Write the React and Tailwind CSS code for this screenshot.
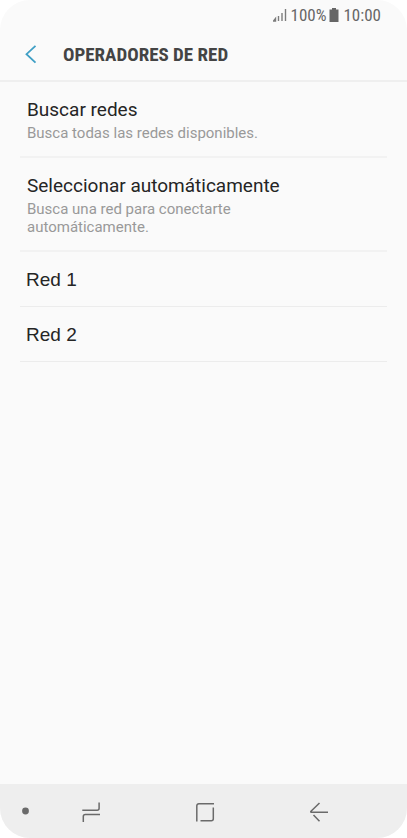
const options = [
  { title: "Buscar redes", detail: "Busca todas las redes disponibles." },
  {
    title: "Seleccionar automáticamente",
    detail: "Busca una red para conectarte automáticamente.",
  },
];

const networks = ["Red 1", "Red 2"];

function StatusBar() {
  return (
    <div className="flex h-[30px] items-center justify-end pr-[26px] font-['Roboto_Condensed',Roboto,sans-serif] text-[17px] leading-5 text-[#666666]">
      <svg width="14" height="14" viewBox="0 0 14 14" className="mr-1" aria-hidden="true">
        <path
          d="M.5 13l2-2.5V13zM5.5 8v5M9 5v8M12.5 1v12"
          fill="none"
          stroke="#7c7c7c"
          strokeWidth="1.4"
        />
      </svg>
      <span>100%</span>
      <svg width="10" height="14" viewBox="0 0 10 14" className="mr-1 ml-[3px]" aria-hidden="true">
        <path d="M3 0h4v1.5h2.5V14h-9V1.5H3z" fill="#666666" />
      </svg>
      <span>10:00</span>
    </div>
  );
}

function Header() {
  return (
    <header className="flex h-[52px] items-center border-b-2 border-[#efefef] pl-6">
      <button type="button" aria-label="Atrás" className="mr-6 shrink-0">
        <svg width="15" height="20" viewBox="0 0 15 20" className="block">
          <path
            d="M11.5 .8L2.5 9.2l9 8.5"
            fill="none"
            stroke="#3f9fc5"
            strokeWidth="1.8"
          />
        </svg>
      </button>
      <h1 className="font-['Roboto_Condensed',Roboto,sans-serif] text-[19px] leading-6 font-bold text-[#444444]">
        OPERADORES DE RED
      </h1>
    </header>
  );
}

function NavBar() {
  return (
    <nav className="flex h-[54px] items-center bg-[#eeeeee] pt-0.5 pl-[22px]">
      <button type="button" aria-label="Fijar barra" className="mr-[51px]">
        <svg width="8" height="20" viewBox="0 0 8 20" className="block">
          <circle cx="3.5" cy="9" r="3.4" fill="#6a6a6a" />
        </svg>
      </button>
      <div className="flex gap-[94px]">
        <button type="button" aria-label="Recientes">
          <svg width="20" height="22" viewBox="0 0 20 22" className="block">
            <path
              d="M1.3 9.2h14.8a2 2 0 0 0 2-2V1.5M19 13.5H4.3a2 2 0 0 0-2 2V21"
              fill="none"
              stroke="#6a6a6a"
              strokeWidth="1.5"
            />
          </svg>
        </button>
        <button type="button" aria-label="Inicio">
          <svg width="20" height="22" viewBox="0 0 20 22" className="block">
            <path
              d="M1.8 20.5V4.8a2 2 0 0 1 2-2H19M18.3 6.5v11.3a2 2 0 0 1-2 2H5.5"
              fill="none"
              stroke="#6a6a6a"
              strokeWidth="1.5"
            />
          </svg>
        </button>
        <button type="button" aria-label="Volver">
          <svg width="20" height="22" viewBox="0 0 20 22" className="block">
            <path
              d="M10.5 2L2 10.3q-.8 1 .4 1H19M4.5 14l6 6.3"
              fill="none"
              stroke="#6a6a6a"
              strokeWidth="1.5"
            />
          </svg>
        </button>
      </div>
    </nav>
  );
}

export default function App() {
  return (
    <div className="min-h-screen bg-white">
      <div className="flex min-h-screen flex-col overflow-hidden rounded-[30px] bg-[#fafafa] font-['Roboto',sans-serif]">
        <StatusBar />
        <Header />
        <main className="grow px-5">
          <ul>
            {options.map((option) => (
              <li key={option.title} className="border-b-2 border-[#f2f2f2]">
                <button type="button" className="block w-full px-[7px] pt-4 pb-[14px] text-left">
                  <span className="block text-[19px] leading-6 text-[#252525]">
                    {option.title}
                  </span>
                  <span className="mt-0.5 block max-w-60 text-[15px] leading-[18px] text-[#999999]">
                    {option.detail}
                  </span>
                </button>
              </li>
            ))}
            {networks.map((name) => (
              <li key={name} className="border-b border-[#ececec]">
                <button
                  type="button"
                  className="block w-full px-[6px] pt-4 pb-[14px] text-left font-['Liberation_Sans',Arial,sans-serif] text-[19px] leading-6 text-[#252525]"
                >
                  {name}
                </button>
              </li>
            ))}
          </ul>
        </main>
        <NavBar />
      </div>
    </div>
  );
}
